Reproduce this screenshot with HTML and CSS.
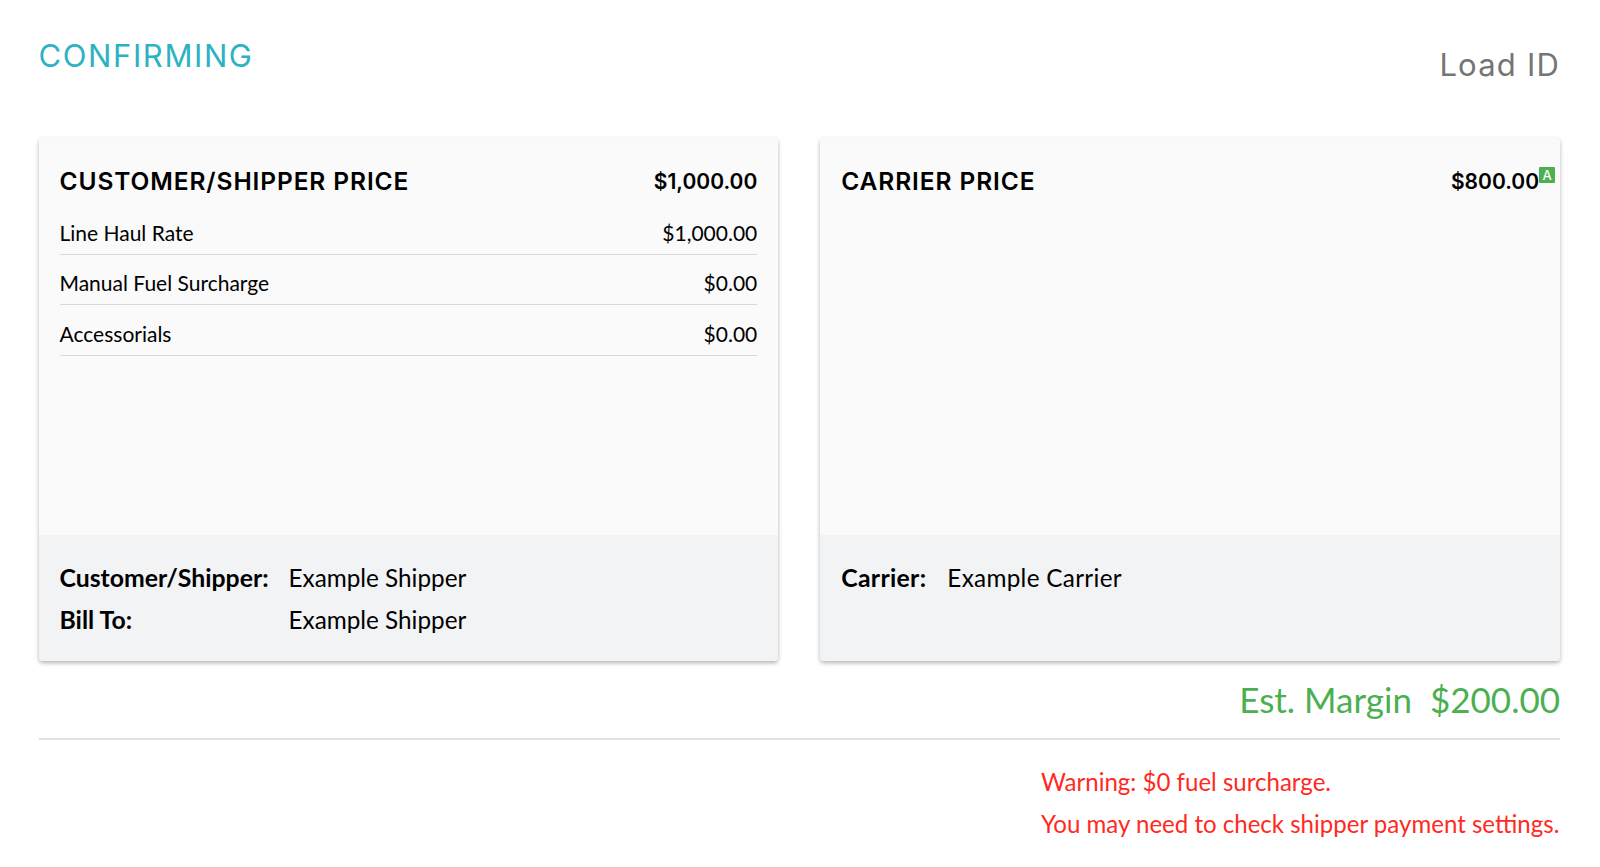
FILE: index.html
```html
<!DOCTYPE html>
<html lang="en">
<head>
    <meta charset="UTF-8">
    <title>Load pricing</title>
    <link rel="stylesheet" href="styles.css">
</head>
<body>
    <div class="page">
        <div class="top">
            <div class="status">CONFIRMING</div>
            <div class="load-id">Load ID</div>
        </div>

        <div class="cards">
            <div class="card">
                <div class="card-body">
                    <div class="card-head">
                        <span class="card-title">CUSTOMER/SHIPPER PRICE</span>
                        <span class="card-total">$1,000.00</span>
                    </div>
                    <div class="line"><span>Line Haul Rate</span><span>$1,000.00</span></div>
                    <div class="line"><span>Manual Fuel Surcharge</span><span>$0.00</span></div>
                    <div class="line"><span>Accessorials</span><span>$0.00</span></div>
                </div>
                <div class="card-foot">
                    <div class="party"><b class="party-label wide">Customer/Shipper:</b><span>Example Shipper</span></div>
                    <div class="party"><b class="party-label wide">Bill To:</b><span>Example Shipper</span></div>
                </div>
            </div>

            <div class="card">
                <div class="card-body">
                    <div class="card-head">
                        <span class="card-title">CARRIER PRICE</span>
                        <span class="card-total">$800.00<span class="badge">A</span></span>
                    </div>
                </div>
                <div class="card-foot">
                    <div class="party carrier"><b class="party-label">Carrier:</b><span>Example Carrier</span></div>
                </div>
            </div>
        </div>

        <div class="margin"><span>Est. Margin</span><span>$200.00</span></div>
        <hr class="rule">
        <div class="warnings">
            <div>Warning: $0 fuel surcharge.</div>
            <div>You may need to check shipper payment settings.</div>
        </div>
    </div>
</body>
</html>
```

FILE: styles.css
```css
/* Reset styles */
* {
    margin: 0;
    padding: 0;
    box-sizing: border-box;
}

body {
    background-color: #fff;
    color: #000;
    font-family: 'Lato', 'Open Sans', sans-serif;
    font-size: 21px;
}

.page {
    padding: 0 40px 0 38.5px;
}

/* Header */
.top {
    display: flex;
    justify-content: space-between;
    height: 138px;
    font-family: 'Inter', 'Open Sans', sans-serif;
}

.status {
    margin-top: 36px;
    font-size: 31px;
    line-height: 40px;
    letter-spacing: 1.6px;
    color: #2db2c4;
}

.load-id {
    margin-top: 45px;
    font-size: 31px;
    line-height: 40px;
    letter-spacing: 1.2px;
    color: #757575;
}

/* Price cards */
.cards {
    display: flex;
    gap: 42px;
}

.card {
    flex: 1;
    display: flex;
    flex-direction: column;
    height: 523px;
    background-color: #fafafa;
    border-radius: 4px;
    box-shadow: 0 2px 4px rgba(0, 0, 0, 0.3);
    overflow: hidden;
}

.card-body {
    flex: 1;
    padding: 21px 21px 0;
}

.card-head {
    display: flex;
    justify-content: space-between;
    align-items: center;
    height: 40px;
    margin-bottom: 5px;
    padding-top: 3px;
}

.card-title {
    font-family: 'Inter', 'Open Sans', sans-serif;
    font-size: 24.5px;
    font-weight: 600;
    letter-spacing: 0.9px;
}

.card-total {
    position: relative;
    top: 1px;
    font-family: 'Inter', 'Open Sans', sans-serif;
    font-size: 21px;
    font-weight: 600;
}

.badge {
    position: absolute;
    top: -2px;
    left: 100%;
    width: 16px;
    height: 16px;
    background-color: #4caf50;
    color: #fff;
    border-radius: 1px;
    font-size: 13px;
    font-weight: 500;
    line-height: 16px;
    text-align: center;
}

.line {
    display: flex;
    justify-content: space-between;
    align-items: center;
    height: 50.5px;
    padding-top: 7px;
    border-bottom: 1px solid #d8d8d8;
}

.card-foot {
    height: 126px;
    padding: 21px 21px 0;
    background-color: #f2f3f5;
    font-size: 24.3px;
}

.party {
    display: flex;
    align-items: center;
    height: 42px;
}

.party.carrier {
    letter-spacing: 0.3px;
}

.party-label {
    margin-right: 21px;
    font-size: 24.8px;
}

.party-label.wide {
    width: 229px;
    margin-right: 0;
}

/* Margin and warnings */
.margin {
    display: flex;
    justify-content: flex-end;
    gap: 18px;
    height: 77px;
    padding-top: 14px;
    font-size: 35px;
    line-height: 48px;
    color: #4caf50;
}

.rule {
    border: none;
    border-top: 2px solid #e0e0e0;
}

.warnings {
    width: 519px;
    margin-left: auto;
    padding-top: 21px;
    font-size: 24.05px;
    line-height: 42px;
    color: #ff2a1f;
}
```
